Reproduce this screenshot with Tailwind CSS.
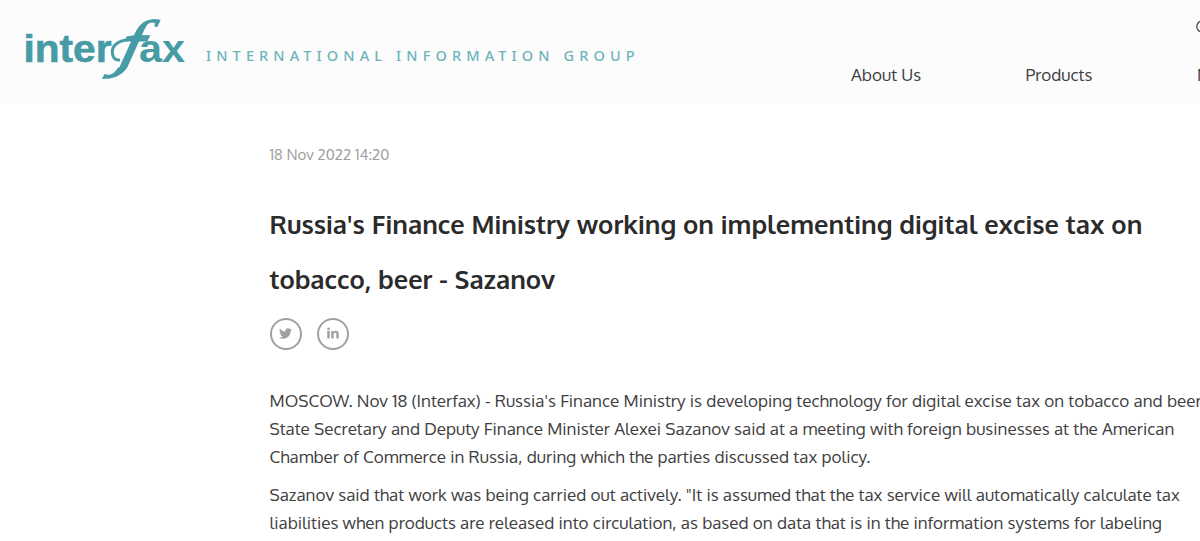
<!DOCTYPE html>
<html lang="en">
<head>
  <meta charset="UTF-8" />
  <meta name="viewport" content="width=device-width, initial-scale=1.0"/>
  <title>Russia's Finance Ministry working on implementing digital excise tax on tobacco, beer - Sazanov</title>
  <script src="https://cdn.jsdelivr.net/npm/@tailwindcss/browser@4"></script>
</head>
<body class="bg-white text-[#404040] font-['Oxygen','Noto_Sans',sans-serif] w-[1200px] h-[541px] overflow-hidden">

<header class="h-[104px] bg-[#fcfcfc] flex items-start overflow-hidden">
  <a href="#" class="shrink-0 ml-5 mt-[15px]">
    <!-- logo -->
    <svg class="overflow-visible" width="170" height="70" viewBox="20 15 170 70" fill="#479ba5">
      <clipPath id="fcut"><rect x="100" y="10" width="70" height="58"/></clipPath>
      <text x="23.5" y="62" font-family="Liberation Sans" font-weight="700" font-size="39.500" textLength="88" lengthAdjust="spacingAndGlyphs" stroke="#479ba5" stroke-width="0.6">inter</text>
      <text x="139" y="62" font-family="Liberation Sans" font-weight="700" font-size="39.500" textLength="46" lengthAdjust="spacingAndGlyphs">ax</text>
      <g clip-path="url(#fcut)">
        <text transform="translate(116.500 66) skewX(-13) scale(1.270 1)" x="0" y="0" font-family="Liberation Serif" font-style="italic" font-size="66" stroke="#479ba5" stroke-width="0.8">f</text>
      </g>
      <!-- swash round the f and its tail -->
      <path d="M148 40 H129 C117 40 111 47 112.500 54 C113.300 58.500 116 60.500 120 60" fill="none" stroke="#479ba5" stroke-width="3"/>
      <path d="M127.300 67.500 C121 76 114 79 102 79 L104.500 74 C110 76 114 74 118 67.500 Z"/>
    </svg>
  </a>
  <div class="shrink-0 ml-4 mt-[45px] w-[439px] text-[#6db3bb] text-[14.5px] leading-5 tracking-[5.12px] font-medium font-['Noto_Sans',sans-serif] whitespace-nowrap">INTERNATIONAL INFORMATION GROUP</div>
  <div class="relative flex-1 h-full">
    <nav class="flex pt-[61px] ml-[206px] text-[17.07px] leading-[26px] whitespace-nowrap">
      <a href="#" class="shrink-0 w-[174.5px]">About Us</a>
      <a href="#" class="shrink-0 w-[171.5px]">Products</a>
      <a href="#" class="shrink-0">News</a>
    </nav>
    <svg class="absolute top-5 left-[551px]" width="14" height="14" viewBox="0 0 14 14" fill="none" stroke="#404040" stroke-width="1.2">
      <circle cx="6.5" cy="6.5" r="5.7"/>
    </svg>
  </div>
</header>

<main class="pl-[269.5px] pt-[39px] whitespace-nowrap">
  <div class="text-[15px] leading-6 text-[#9e9e9e]">18 Nov 2022 14:20</div>

  <h1 class="mt-[30px] text-[25.6px] leading-[55px] font-bold text-[#2b2b2b]">
    Russia's Finance Ministry working on implementing digital excise tax on<br>
    tobacco, beer - Sazanov
  </h1>

  <div class="mt-[11px] flex gap-[15px]">
    <a href="#" class="size-8 rounded-full border-2 border-[#a0a0a0] flex items-center justify-center">
      <svg class="-mt-0.5" width="13" height="13" viewBox="0 0 24 24" fill="#a0a0a0"><path d="M24 4.6a10 10 0 0 1-2.8.8 5 5 0 0 0 2.1-2.7 10 10 0 0 1-3.1 1.2 4.9 4.9 0 0 0-8.4 4.5A14 14 0 0 1 1.700 3.200a4.900 4.900 0 0 0 1.500 6.500 4.900 4.900 0 0 1-2.200-.6 4.900 4.900 0 0 0 3.900 4.900 5 5 0 0 1-2.200.1 4.900 4.900 0 0 0 4.600 3.400A10 10 0 0 1 0 19.500a14 14 0 0 0 21.500-12.400A10 10 0 0 0 24 4.600z"/></svg>
    </a>
    <a href="#" class="size-8 rounded-full border-2 border-[#a0a0a0] flex items-center justify-center">
      <svg class="-mt-0.5" width="12" height="12" viewBox="0 0 24 24" fill="#a0a0a0"><path d="M.5 8h5v15h-5zM3 1a2.700 2.700 0 1 1 0 5.400A2.700 2.700 0 0 1 3 1zM8.500 8h4.700v2c.8-1.400 2.400-2.400 4.700-2.400 4.700 0 5.600 3.100 5.600 7.100V23h-4.900v-7.400c0-1.800 0-4-2.500-4s-2.700 1.900-2.700 3.900V23H8.500z"/></svg>
    </a>
  </div>

  <div class="mt-[37px] text-[17.07px] leading-[27.8px]">
    <p>
      MOSCOW. Nov 18 (Interfax) - Russia's Finance Ministry is developing technology for digital excise tax on tobacco and beer,<br>
      State Secretary and Deputy Finance Minister Alexei Sazanov said at a meeting with foreign businesses at the American<br>
      Chamber of Commerce in Russia, during which the parties discussed tax policy.
    </p>
    <p class="mt-[11px]">
      Sazanov said that work was being carried out actively. "It is assumed that the tax service will automatically calculate tax<br>
      liabilities when products are released into circulation, as based on data that is in the information systems for labeling
    </p>
  </div>
</main>
</body>
</html>
